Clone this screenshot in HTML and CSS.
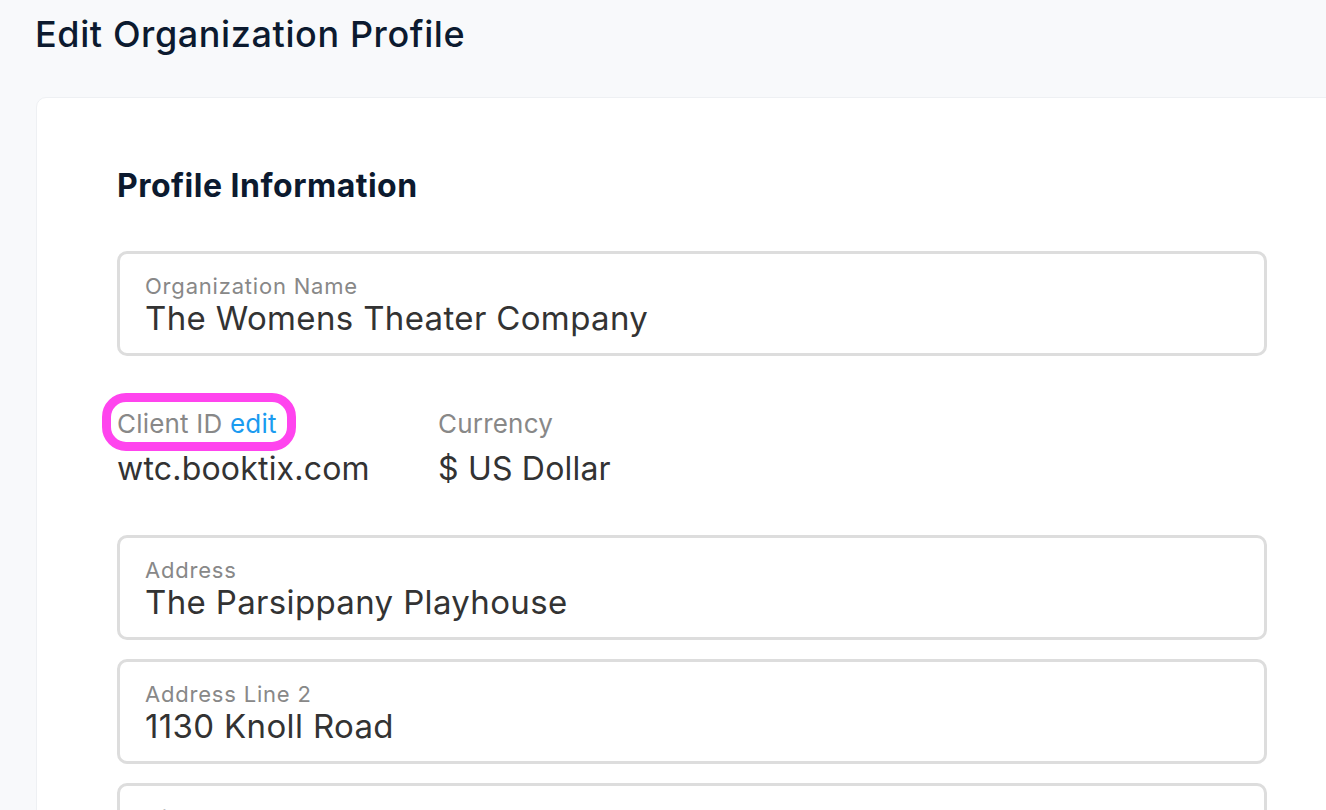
FILE: index.html
```html
<!DOCTYPE html>
<html lang="en">
<head>
<meta charset="utf-8">
<title>Edit Organization Profile</title>
<link rel="stylesheet" href="styles.css">
</head>
<body>
<div class="page">
  <h1 class="page-title">Edit Organization Profile</h1>
  <div class="card">
    <h2 class="section-title">Profile Information</h2>
    <div class="field">
      <div class="field-label">Organization Name</div>
      <div class="field-value">The Womens Theater Company</div>
    </div>
    <div class="info-row">
      <div class="info-col info-client">
        <div class="info-label">Client ID <a class="edit-link" href="#">edit</a></div>
        <div class="info-value">wtc.booktix.com</div>
        <span class="highlight"></span>
      </div>
      <div class="info-col">
        <div class="info-label">Currency</div>
        <div class="info-value">$ US Dollar</div>
      </div>
    </div>
    <div class="field">
      <div class="field-label">Address</div>
      <div class="field-value">The Parsippany Playhouse</div>
    </div>
    <div class="field">
      <div class="field-label">Address Line 2</div>
      <div class="field-value">1130 Knoll Road</div>
    </div>
    <div class="field">
      <div class="field-label">City</div>
      <div class="field-value">Parsippany</div>
    </div>
  </div>
</div>
</body>
</html>
```

FILE: styles.css
```css
html, body {
  margin: 0;
  padding: 0;
  height: 100%;
  overflow: hidden;
}
body {
  background: #f8f9fb;
  font-family: Inter, "Noto Sans", sans-serif;
  color: #333333;
}
.page {
  padding: 12px 0 0 35px;
}
.page-title {
  margin: 0;
  font-size: 36px;
  line-height: 44px;
  font-weight: 500;
  color: #0c1a2f;
  letter-spacing: 0.6px;
}
.card {
  margin-top: 41px;
  margin-left: 1px;
  width: 1312px;
  box-sizing: border-box;
  background: #ffffff;
  border-radius: 10px;
  border: 1px solid #eef0f3;
  padding: 68px 81px 40px 80px;
}
.section-title {
  margin: 0 0 45px 0;
  font-size: 32px;
  line-height: 40px;
  font-weight: 700;
  color: #0c1a2f;
  letter-spacing: 0.5px;
}
.field {
  border: 3px solid #dddddd;
  border-radius: 10px;
  padding: 19px 25px 16px 25px;
  margin-bottom: 19px;
  width: 1150px;
  box-sizing: border-box;
}
.field-label {
  font-size: 22px;
  line-height: 26px;
  color: #888888;
  letter-spacing: 0.8px;
}
.field-value {
  font-size: 33px;
  line-height: 38px;
  color: #333333;
  letter-spacing: 0.35px;
}
.info-row {
  display: flex;
  padding: 33px 0 47px 0;
  margin-top: -19px;
  margin-bottom: 0;
}
.field + .info-row {
  margin-top: 0;
}
.info-col {
  position: relative;
}
.info-client {
  width: 321px;
}
.info-label {
  font-size: 26px;
  line-height: 32px;
  color: #888888;
  letter-spacing: 0.2px;
}
.edit-link {
  color: #1b9bf0;
  text-decoration: none;
}
.info-value {
  margin-top: 10px;
  font-size: 32px;
  line-height: 38px;
  color: #333333;
  letter-spacing: 0.2px;
}
.highlight {
  position: absolute;
  left: -15px;
  top: -15px;
  width: 176px;
  height: 40px;
  border: 9px solid #ff44ee;
  border-radius: 24px;
}
```
